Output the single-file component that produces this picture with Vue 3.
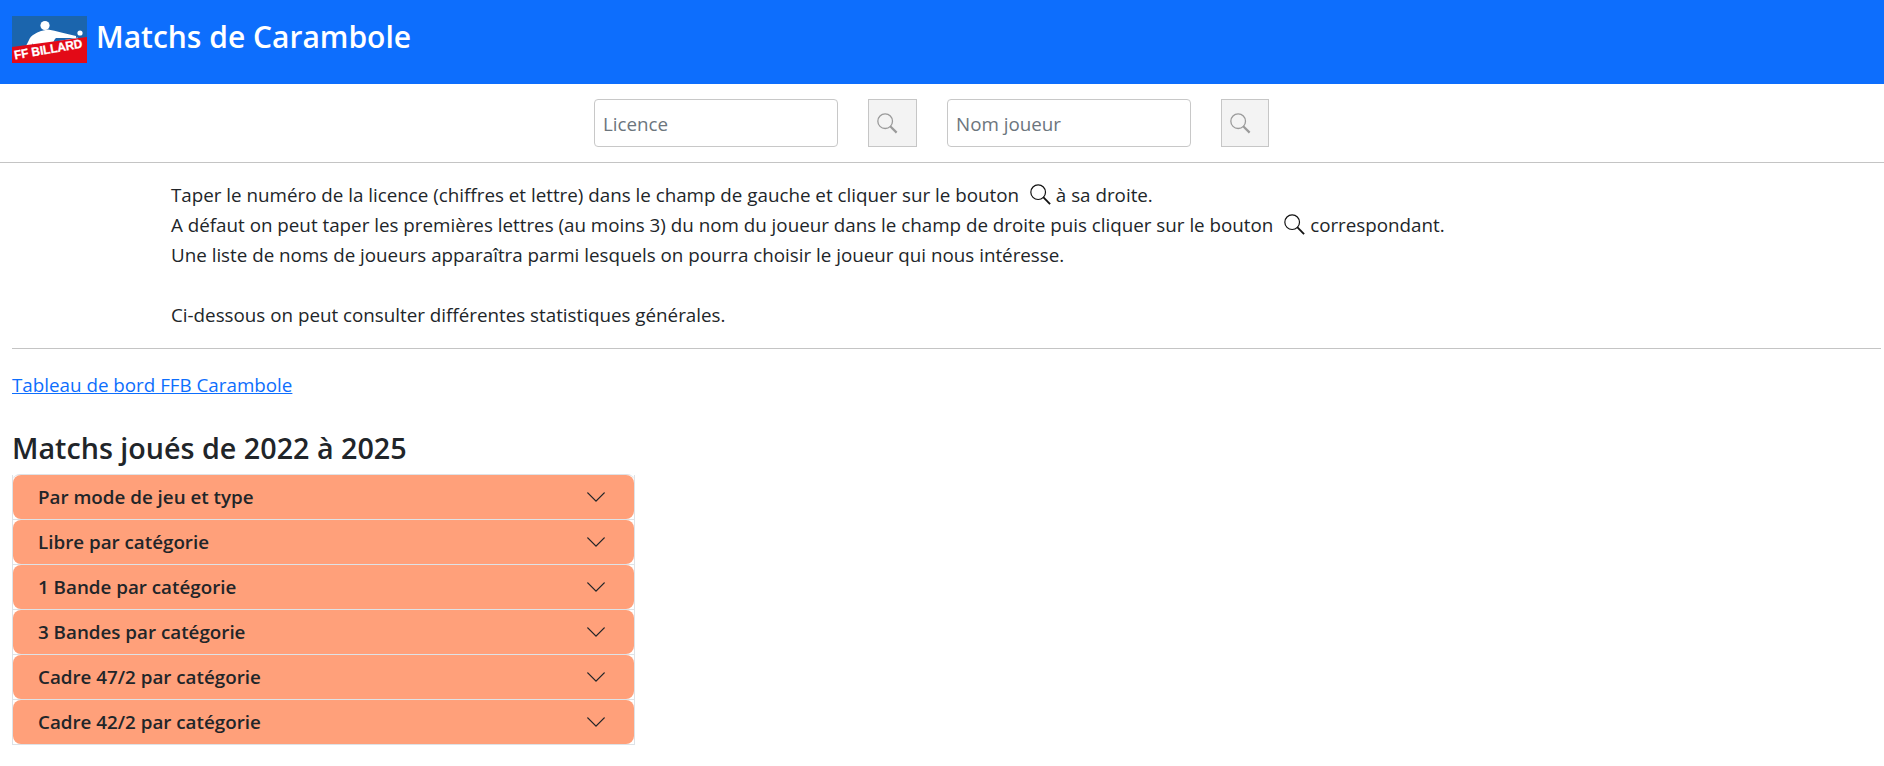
<script setup>
const items = ['Par mode de jeu et type','Libre par catégorie','1 Bande par catégorie','3 Bandes par catégorie','Cadre 47/2 par catégorie','Cadre 42/2 par catégorie']
</script>

<template>
  <div class="page">
    <header class="nav">
      <svg class="logo" viewBox="0 0 75 47" width="75" height="47">
        <rect width="75" height="47" fill="#1b65ad"/>
        <circle cx="33" cy="9.5" r="4.6" fill="#fff"/>
        <path d="M13 32 L17 24 C19 19 24 17 29 15 L36 13.5 C44 15 54 18 64 20 L64 22 L44 22 C41 25 41 28 41 30 L20 33 L21 27 L18 32 Z" fill="#fff"/>
        <path d="M4 33.5 L66 22" stroke="#e4e9f2" stroke-width="1.2"/>
        <circle cx="68" cy="17" r="2.6" fill="#fff"/>
        <path d="M0 31 L75 21 V47 H0 Z" fill="#e30a17"/>
        <text x="3" y="43.5" transform="rotate(-10 3 43.5)" class="logo-text" textLength="69" lengthAdjust="spacingAndGlyphs">FF BILLARD</text>
      </svg>
      <h1 class="title">Matchs de Carambole</h1>
    </header>

    <div class="search">
      <input class="field" placeholder="Licence" />
      <button class="btn" type="button" aria-label="Chercher">
        <svg viewBox="0 0 24 24" width="22" height="22" fill="none" stroke="#9a9a9a"><circle cx="10" cy="10" r="8" stroke-width="1.4"/><path d="M15.5 15.5 L22.5 22.5" stroke-width="2.4"/></svg>
      </button>
      <input class="field" placeholder="Nom joueur" />
      <button class="btn" type="button" aria-label="Chercher">
        <svg viewBox="0 0 24 24" width="22" height="22" fill="none" stroke="#9a9a9a"><circle cx="10" cy="10" r="8" stroke-width="1.4"/><path d="M15.5 15.5 L22.5 22.5" stroke-width="2.4"/></svg>
      </button>
    </div>
    <hr class="rule" />

    <div class="intro">
      <div>Taper le numéro de la licence (chiffres et lettre) dans le champ de gauche et cliquer sur le bouton <svg class="mag" viewBox="0 0 24 24" width="22" height="22" fill="none" stroke="#111"><circle cx="10" cy="10" r="8" stroke-width="1.3"/><path d="M15.5 15.5 L23 23" stroke-width="2"/></svg> à sa droite.</div>
      <div>A défaut on peut taper les premières lettres (au moins 3) du nom du joueur dans le champ de droite puis cliquer sur le bouton <svg class="mag" viewBox="0 0 24 24" width="22" height="22" fill="none" stroke="#111"><circle cx="10" cy="10" r="8" stroke-width="1.3"/><path d="M15.5 15.5 L23 23" stroke-width="2"/></svg> correspondant.</div>
      <div>Une liste de noms de joueurs apparaîtra parmi lesquels on pourra choisir le joueur qui nous intéresse.</div>
      <div class="blank"></div>
      <div>Ci-dessous on peut consulter différentes statistiques générales.</div>
    </div>
    <hr class="rule second" />

    <a class="link" href="#">Tableau de bord FFB Carambole</a>
    <h2 class="heading">Matchs joués de 2022 à 2025</h2>

    <div class="accordion">
      <div v-for="item in items" :key="item" class="acc-item">
        <div class="acc-btn">
          <span>{{ item }}</span>
          <svg viewBox="0 0 16 16" width="22" height="22" fill="#212529"><path fill-rule="evenodd" d="M1.646 4.646a.5.5 0 0 1 .708 0L8 10.293l5.646-5.647a.5.5 0 0 1 .708.708l-6 6a.5.5 0 0 1-.708 0l-6-6a.5.5 0 0 1 0-.708z"/></svg>
        </div>
      </div>
    </div>
  </div>
</template>

<style>
html, body { margin: 0; background: #fff; }
</style>

<style scoped>
.page {
  font-family: "Open Sans", "Noto Sans", sans-serif;
  font-size: 18.8px;
  color: #212529;
  overflow: hidden;
  height: 766px;
}
.nav {
  height: 84px;
  background: #0d6efd;
  display: flex;
  align-items: flex-start;
  padding: 16px 12px 0;
  box-sizing: border-box;
  gap: 9px;
}
.logo { display: block; flex: none; }
.logo-text { font: 900 12.5px "Liberation Sans", sans-serif; fill: #fff; stroke: #fff; stroke-width: 0.3px; }
.title {
  margin: 0;
  color: #fff;
  font-size: 30px;
  font-weight: 600;
  line-height: 42px;
}
.search {
  display: flex;
  justify-content: center;
  gap: 30px;
  padding: 15px 21px 0 0;
  height: 78px;
  box-sizing: border-box;
}
.field {
  width: 244px;
  height: 48px;
  box-sizing: border-box;
  border: 1px solid #c8c8c8;
  border-radius: 4px;
  padding: 1px 8px 0;
  font: inherit;
  color: #212529;
  background: #fff;
}
.field::placeholder { color: #6c757d; opacity: 1; }
.btn {
  width: 49px;
  height: 48px;
  box-sizing: border-box;
  border: 1px solid #c6c6c6;
  background: #f3f3f3;
  padding: 0 0 0 7px;
  display: flex;
  align-items: center;
  justify-content: flex-start;
}
.btn:last-child { width: 48px; }
.rule { border: 0; height: 1px; background: #c4c4c4; margin: 0; }
.second { margin: 0 3px 0 12px; }
.intro {
  padding: 17px 0 18px 171px;
  line-height: 30px;
}
.blank { height: 30px; }
.mag { vertical-align: -3px; margin-left: 5px; }
.link {
  display: block;
  margin: 21px 12px 0;
  color: #0d6efd;
  line-height: 30px;
  width: max-content;
  text-decoration: underline;
}
.heading {
  margin: 31px 12px 0;
  font-size: 28.7px;
  font-weight: 600;
  line-height: 34px;
}
.accordion {
  margin: 9px 0 0 12px;
  width: 623px;
  border-top: 1px solid #dee2e6;
  border-radius: 8px 8px 0 0;
  display: flex;
  flex-direction: column;
}
.acc-item {
  height: 45px;
  box-sizing: border-box;
  border: 1px solid #dee2e6;
  border-top: 0;
}
.acc-btn {
  height: 100%;
  box-sizing: border-box;
  background: #ffa07a;
  border-radius: 8px;
  padding: 0 27px 0 25px;
  display: flex;
  align-items: center;
  justify-content: space-between;
  font-weight: 600;
}
</style>
